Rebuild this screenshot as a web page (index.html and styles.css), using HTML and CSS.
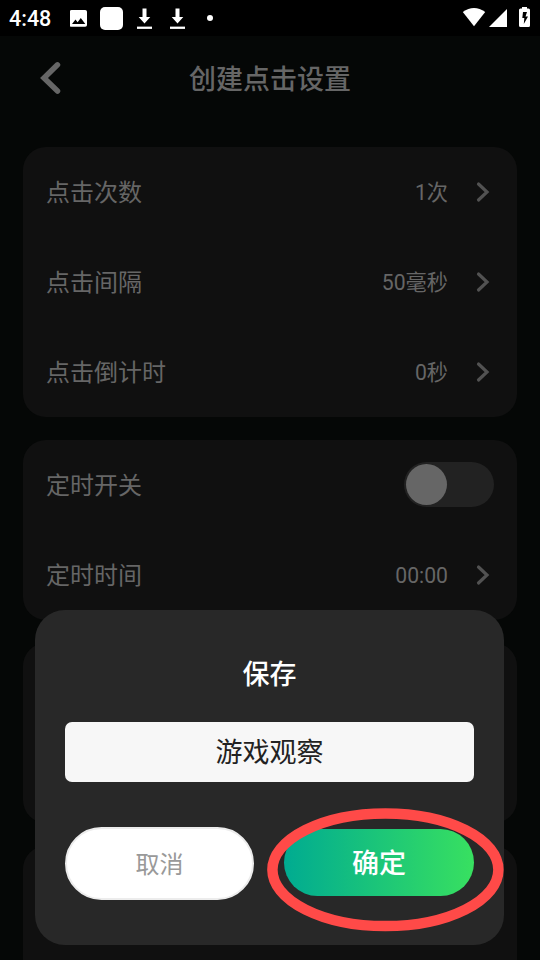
FILE: index.html
```html
<!DOCTYPE html>
<html lang="zh-CN">
<head>
<meta charset="utf-8">
<title>创建点击设置</title>
<link rel="stylesheet" href="styles.css">
</head>
<body>
<div class="screen">
  <header class="status">
    <span class="clock">4:48</span>
    <svg class="status-icons" width="150" height="36" viewBox="70 0 150 36">
      <path fill="#fff" fill-rule="evenodd" d="M71.500 10H85.200Q87 10 87 11.800V25Q87 26.800 85.200 26.800H71.500Q69.700 26.800 69.700 25V11.800Q69.700 10 71.500 10ZM72 24H85.300L80.800 18L77.600 22.200L75.500 19.600Z"/>
      <rect x="100" y="7" width="23" height="23" rx="5" fill="#fff"/>
      <g id="download" fill="#fff">
        <path d="M142.500 8.500H146.500V17H150.300L144.500 23.500L138.700 17H142.500Z"/>
        <path d="M137 26.600H152V28.900H137Z"/>
      </g>
      <use href="#download" x="33"/>
      <circle cx="210" cy="18" r="3" fill="#fff"/>
    </svg>
    <svg class="system-icons" width="78" height="36" viewBox="462 0 78 36" fill="#fff">
      <path d="M462.800 12Q474 4 485.200 12L474 26.300Z"/>
      <path d="M507 9V27H489Z"/>
      <path fill-rule="evenodd" d="M522 7H527V8.500H528.500Q530 8.500 530 10V25.500Q530 27 528.500 27H520.500Q519 27 519 25.500V10Q519 8.500 520.500 8.500H522ZM523 12L522.300 18H524.300L523.800 24L528 16.500H525.500L527 12Z"/>
    </svg>
  </header>
  <div class="titlebar">
    <svg class="back" width="24" height="34" viewBox="0 0 24 34"><path d="M18.500 3.800L5 17L18.500 30" fill="none" stroke="#666" stroke-width="5.500" stroke-linecap="round" stroke-linejoin="miter"/></svg>
    <h1>创建点击设置</h1>
  </div>
  <main class="cards">
    <section class="card">
      <div class="row"><span class="label">点击次数</span><span class="value">1次</span><svg class="chevron" viewBox="0 0 14 22"><path d="M2.500 3L11 11L2.500 19"/></svg></div>
      <div class="row"><span class="label">点击间隔</span><span class="value">50毫秒</span><svg class="chevron" viewBox="0 0 14 22"><path d="M2.500 3L11 11L2.500 19"/></svg></div>
      <div class="row"><span class="label">点击倒计时</span><span class="value">0秒</span><svg class="chevron" viewBox="0 0 14 22"><path d="M2.500 3L11 11L2.500 19"/></svg></div>
    </section>
    <section class="card">
      <div class="row"><span class="label">定时开关</span><span class="switch"><span class="knob"></span></span></div>
      <div class="row"><span class="label">定时时间</span><span class="value">00:00</span><svg class="chevron" viewBox="0 0 14 22"><path d="M2.500 3L11 11L2.500 19"/></svg></div>
    </section>
    <section class="card"><div class="row"></div><div class="row"></div></section>
    <section class="card"><div class="row"></div><div class="row"></div></section>
  </main>
  <div class="dialog">
    <h2>保存</h2>
    <div class="field">游戏观察</div>
    <div class="actions">
      <div class="button cancel">取消</div>
      <div class="button confirm">确定</div>
    </div>
  </div>
  <svg class="ring" width="240" height="126" viewBox="0 0 240 126"><ellipse cx="120.400" cy="62.800" rx="113" ry="56.300" fill="none" stroke="#ff4a48" stroke-width="10.500"/></svg>
</div>
</body>
</html>
```
FILE: styles.css
```css
* { box-sizing: border-box; }
body {
  margin: 0;
  background: #050706;
  font-family: Roboto, "Noto Sans CJK SC", sans-serif;
}
.screen {
  position: relative;
  height: 960px;
  overflow: hidden;
  color: #666;
}
.status {
  display: flex;
  align-items: center;
  height: 36px;
  background: #000;
  color: #fff;
}
.clock {
  width: 70px;
  padding-left: 9px;
  font-size: 21.5px;
  font-weight: 500;
  line-height: 36px;
  padding-top: 1px;
}
.status svg { display: block; }
.system-icons { margin-left: auto; }
.titlebar {
  display: grid;
  grid-template-columns: 64px 1fr 64px;
  align-items: center;
  height: 84px;
}
.back { margin-left: 39px; }
h1, h2 {
  margin: 0;
  font-size: 27px;
  line-height: 40px;
  font-weight: 500;
  text-align: center;
}
h1 { padding-top: 3px; }
.cards {
  display: flex;
  flex-direction: column;
  gap: 23px;
  padding: 27px 23px 0;
}
.card {
  border-radius: 23px;
  background: #101010;
}
.row {
  display: flex;
  align-items: center;
  height: 90px;
  padding: 0 23px;
}
.label {
  margin-right: auto;
  padding-top: 2px;
  font-size: 24px;
  line-height: 36px;
}
.value {
  margin-right: 27px;
  font-size: 21.2px;
  line-height: 36px;
  padding-top: 1px;
}
.chevron {
  width: 14px;
  height: 22px;
  margin-right: 4px;
  margin-bottom: 1px;
  fill: none;
  stroke: #525252;
  stroke-width: 3.2;
  stroke-linecap: round;
}
.value + .chevron { margin-left: 1px; }
.switch {
  width: 90px;
  height: 45px;
  margin-bottom: 1px;
  padding: 2px;
  border-radius: 23px;
  background: #222;
}
.knob {
  display: block;
  width: 41px;
  height: 41px;
  border-radius: 50%;
  background: #666;
}
.dialog {
  position: absolute;
  left: 35px;
  top: 610px;
  width: 469px;
  height: 335px;
  padding: 45px 30px 0;
  border-radius: 30px;
  background: #282828;
}
.dialog h2 { color: #fff; }
.field {
  height: 60px;
  margin-top: 27px;
  border-radius: 7px;
  background: #f7f7f7;
  color: #222;
  font-size: 27px;
  line-height: 63px;
  text-align: center;
}
.actions {
  display: flex;
  align-items: center;
  justify-content: space-between;
  margin-top: 45px;
}
.button {
  text-align: center;
}
.cancel {
  width: 189px;
  height: 73px;
  border: 2px solid #ececec;
  border-radius: 37px;
  background: #fff;
  color: #999;
  font-size: 24px;
  line-height: 73px;
}
.confirm {
  width: 190px;
  height: 67px;
  margin-bottom: 2px;
  border-radius: 34px;
  background: linear-gradient(90deg, #00ab91, #38e060);
  color: #fff;
  font-size: 27px;
  font-weight: 500;
  line-height: 71px;
}
.ring {
  position: absolute;
  left: 265px;
  top: 807px;
}
```
